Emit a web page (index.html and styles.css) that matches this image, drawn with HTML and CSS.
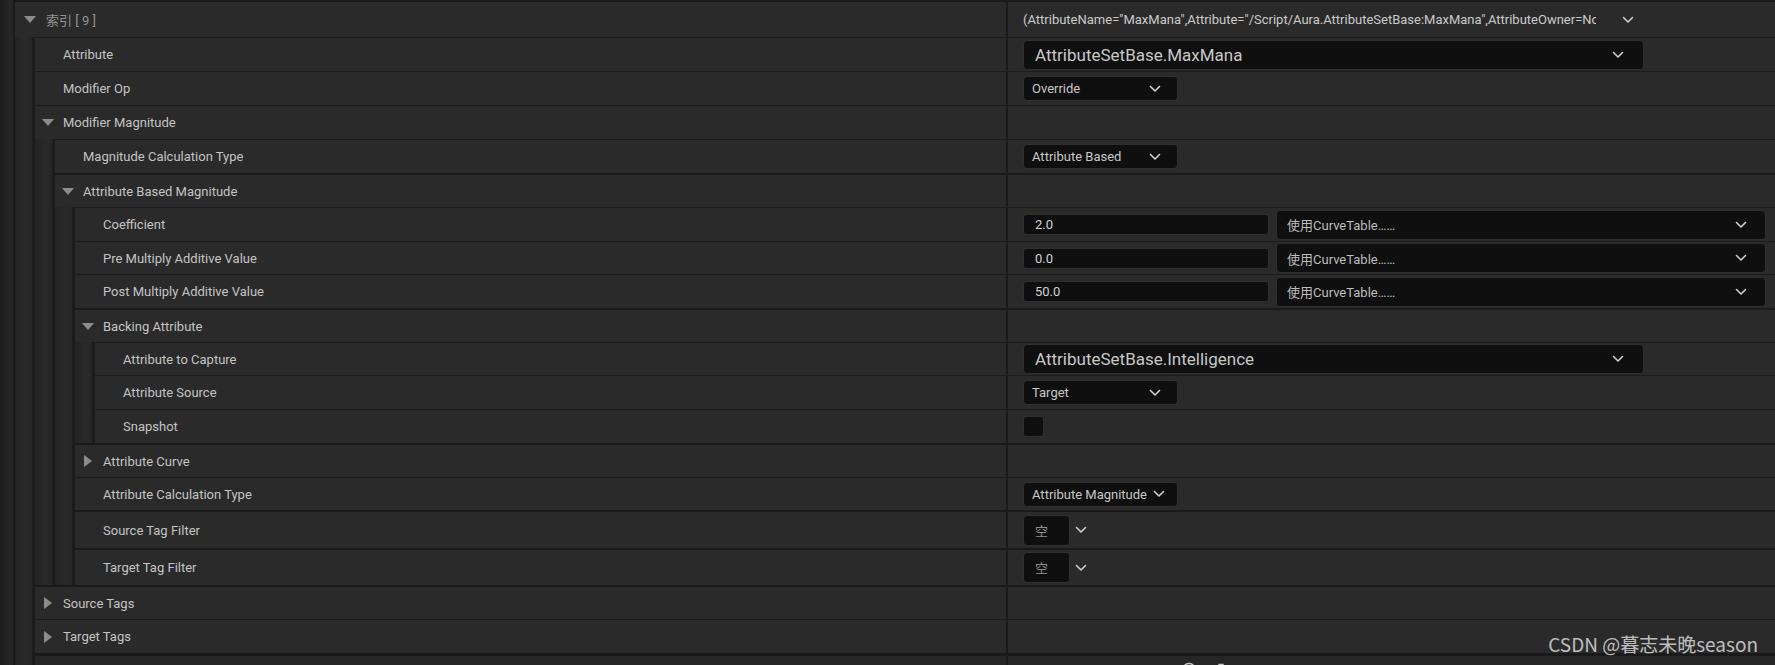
FILE: index.html
```html
<!DOCTYPE html>
<html>
<head>
<meta charset="utf-8">
<title>Details</title>
<link rel="stylesheet" href="styles.css">
</head>
<body>
<div class="panel">

  <div class="row h37 first">
    <div class="name"><span class="ind first"></span>
      <div class="cell top"><span class="twist down"></span><span class="label dim">索引 [ 9 ]</span></div>
    </div>
    <div class="value">
      <span class="summary">(AttributeName="MaxMana",Attribute="/Script/Aura.AttributeSetBase:MaxMana",AttributeOwner=None)</span>
      <svg class="chev sum-chev" viewBox="0 0 12 8"><path d="M1.5 1.5 6 6 10.5 1.5"/></svg>
    </div>
  </div>

  <div class="row">
    <div class="name"><span class="ind first"></span><span class="ind"></span>
      <div class="cell"><span class="twist"></span><span class="label">Attribute</span></div>
    </div>
    <div class="value">
      <div class="combo lg"><span>AttributeSetBase.MaxMana</span><svg class="chev" viewBox="0 0 12 8"><path d="M1.5 1.5 6 6 10.5 1.5"/></svg></div>
    </div>
  </div>

  <div class="row">
    <div class="name"><span class="ind first"></span><span class="ind"></span>
      <div class="cell"><span class="twist"></span><span class="label">Modifier Op</span></div>
    </div>
    <div class="value">
      <div class="combo sm"><span>Override</span><svg class="chev" viewBox="0 0 12 8"><path d="M1.5 1.5 6 6 10.5 1.5"/></svg></div>
    </div>
  </div>

  <div class="row">
    <div class="name"><span class="ind first"></span><span class="ind"></span>
      <div class="cell"><span class="twist down"></span><span class="label">Modifier Magnitude</span></div>
    </div>
    <div class="value"></div>
  </div>

  <div class="row">
    <div class="name"><span class="ind first"></span><span class="ind"></span><span class="ind"></span>
      <div class="cell"><span class="twist"></span><span class="label">Magnitude Calculation Type</span></div>
    </div>
    <div class="value">
      <div class="combo sm"><span>Attribute Based</span><svg class="chev" viewBox="0 0 12 8"><path d="M1.5 1.5 6 6 10.5 1.5"/></svg></div>
    </div>
  </div>

  <div class="row">
    <div class="name"><span class="ind first"></span><span class="ind"></span><span class="ind"></span>
      <div class="cell thick"><span class="twist down"></span><span class="label">Attribute Based Magnitude</span></div>
    </div>
    <div class="value thick"></div>
  </div>

  <div class="row">
    <div class="name"><span class="ind first"></span><span class="ind"></span><span class="ind"></span><span class="ind"></span>
      <div class="cell"><span class="twist"></span><span class="label">Coefficient</span></div>
    </div>
    <div class="value">
      <div class="num">2.0</div>
      <div class="combo curve"><span>使用CurveTable……</span><svg class="chev" viewBox="0 0 12 8"><path d="M1.5 1.5 6 6 10.5 1.5"/></svg></div>
    </div>
  </div>

  <div class="row h33">
    <div class="name"><span class="ind first"></span><span class="ind"></span><span class="ind"></span><span class="ind"></span>
      <div class="cell"><span class="twist"></span><span class="label">Pre Multiply Additive Value</span></div>
    </div>
    <div class="value">
      <div class="num">0.0</div>
      <div class="combo curve"><span>使用CurveTable……</span><svg class="chev" viewBox="0 0 12 8"><path d="M1.5 1.5 6 6 10.5 1.5"/></svg></div>
    </div>
  </div>

  <div class="row">
    <div class="name"><span class="ind first"></span><span class="ind"></span><span class="ind"></span><span class="ind"></span>
      <div class="cell"><span class="twist"></span><span class="label">Post Multiply Additive Value</span></div>
    </div>
    <div class="value">
      <div class="num">50.0</div>
      <div class="combo curve"><span>使用CurveTable……</span><svg class="chev" viewBox="0 0 12 8"><path d="M1.5 1.5 6 6 10.5 1.5"/></svg></div>
    </div>
  </div>

  <div class="row">
    <div class="name"><span class="ind first"></span><span class="ind"></span><span class="ind"></span><span class="ind"></span>
      <div class="cell thick"><span class="twist down"></span><span class="label">Backing Attribute</span></div>
    </div>
    <div class="value thick"></div>
  </div>

  <div class="row h33">
    <div class="name"><span class="ind first"></span><span class="ind"></span><span class="ind"></span><span class="ind"></span><span class="ind"></span>
      <div class="cell"><span class="twist"></span><span class="label">Attribute to Capture</span></div>
    </div>
    <div class="value">
      <div class="combo lg"><span>AttributeSetBase.Intelligence</span><svg class="chev" viewBox="0 0 12 8"><path d="M1.5 1.5 6 6 10.5 1.5"/></svg></div>
    </div>
  </div>

  <div class="row">
    <div class="name"><span class="ind first"></span><span class="ind"></span><span class="ind"></span><span class="ind"></span><span class="ind"></span>
      <div class="cell"><span class="twist"></span><span class="label">Attribute Source</span></div>
    </div>
    <div class="value">
      <div class="combo sm"><span>Target</span><svg class="chev" viewBox="0 0 12 8"><path d="M1.5 1.5 6 6 10.5 1.5"/></svg></div>
    </div>
  </div>

  <div class="row">
    <div class="name"><span class="ind first"></span><span class="ind"></span><span class="ind"></span><span class="ind"></span><span class="ind"></span>
      <div class="cell"><span class="twist"></span><span class="label">Snapshot</span></div>
    </div>
    <div class="value">
      <span class="check"></span>
    </div>
  </div>

  <div class="row">
    <div class="name"><span class="ind first"></span><span class="ind"></span><span class="ind"></span><span class="ind"></span>
      <div class="cell thick"><span class="twist right"></span><span class="label">Attribute Curve</span></div>
    </div>
    <div class="value thick"></div>
  </div>

  <div class="row h33">
    <div class="name"><span class="ind first"></span><span class="ind"></span><span class="ind"></span><span class="ind"></span>
      <div class="cell"><span class="twist"></span><span class="label">Attribute Calculation Type</span></div>
    </div>
    <div class="value">
      <div class="combo sm"><span>Attribute Magnitude</span><svg class="chev" viewBox="0 0 12 8"><path d="M1.5 1.5 6 6 10.5 1.5"/></svg></div>
    </div>
  </div>

  <div class="row h38">
    <div class="name"><span class="ind first"></span><span class="ind"></span><span class="ind"></span><span class="ind"></span>
      <div class="cell thick"><span class="twist"></span><span class="label">Source Tag Filter</span></div>
    </div>
    <div class="value thick">
      <span class="tagbox">空</span>
      <svg class="chev tag-chev" viewBox="0 0 12 8"><path d="M1.5 1.5 6 6 10.5 1.5"/></svg>
    </div>
  </div>

  <div class="row h37">
    <div class="name"><span class="ind first"></span><span class="ind"></span><span class="ind"></span><span class="ind"></span>
      <div class="cell thick"><span class="twist"></span><span class="label">Target Tag Filter</span></div>
    </div>
    <div class="value thick">
      <span class="tagbox">空</span>
      <svg class="chev tag-chev" viewBox="0 0 12 8"><path d="M1.5 1.5 6 6 10.5 1.5"/></svg>
    </div>
  </div>

  <div class="row">
    <div class="name"><span class="ind first"></span><span class="ind"></span>
      <div class="cell thick"><span class="twist right"></span><span class="label">Source Tags</span></div>
    </div>
    <div class="value thick"></div>
  </div>

  <div class="row">
    <div class="name"><span class="ind first"></span><span class="ind"></span>
      <div class="cell"><span class="twist right"></span><span class="label">Target Tags</span></div>
    </div>
    <div class="value"></div>
  </div>

  <div class="row partial">
    <div class="name"><span class="ind first"></span><span class="ind"></span>
      <div class="cell"><span class="twist"></span><span class="label">l</span></div>
    </div>
    <div class="value">
      <span class="array-label">数组元素</span>
      <svg class="icon add-icon" viewBox="0 0 16 16"><circle cx="8" cy="8" r="6.5"/><path d="M8 4.5v7M4.5 8h7"/></svg>
      <svg class="icon trash-icon" viewBox="0 0 16 16"><path d="M2.5 4h11M6 4V2.5h4V4M4 4l1 10h6l1-10"/></svg>
    </div>
  </div>

</div>
<div class="watermark">CSDN @暮志未晚season</div>
</body>
</html>
```

FILE: styles.css
```css
* { box-sizing: border-box; }

html, body {
  margin: 0;
  padding: 0;
  height: 665px;
  overflow: hidden;
  background: #1e1e1e;
}

body {
  position: relative;
  font-family: Roboto, "Noto Sans CJK SC", sans-serif;
  font-size: 13px;
  color: #c4c4c4;
}

.panel {
  display: flex;
  flex-direction: column;
  width: 1775px;
}

.row {
  display: flex;
  flex: none;
  height: 34px;
}
.row.h33 { height: 33px; }
.row.h37 { height: 37px; }
.row.h38 { height: 38px; }
.row.partial { height: 31px; }

.name {
  width: 1008px;
  flex: none;
  display: flex;
  border-right: 2px solid #1a1a1a;
}

.ind {
  width: 20px;
  flex: none;
  background: linear-gradient(to right, #232323, #292929 60%, #262626);
  border-right: 3px solid #1c1c1c;
}
.ind.first {
  width: 15px;
  background: linear-gradient(to right, #1c1c1c, #262626 70%);
  border-right: 2px solid #191919;
}

.cell {
  flex: 1;
  min-width: 0;
  display: flex;
  align-items: center;
  padding-left: 7px;
  background: #2a2a2a;
  border-top: 1px solid #1c1c1c;
}
.cell.top { padding-left: 9px; }

.value {
  flex: 1;
  min-width: 0;
  display: flex;
  align-items: center;
  padding-left: 15px;
  background: #2a2a2a;
  border-top: 1px solid #1c1c1c;
}

.row.first .cell,
.row.first .value { border-top: 2px solid #1a1a1a; }

.cell.thick,
.value.thick { border-top: 2px solid #1a1a1a; }

.row.partial .cell,
.row.partial .value {
  border-top: 3px solid #1a1a1a;
  background: #262626;
}

.twist {
  width: 12px;
  height: 12px;
  flex: none;
  margin-right: 9px;
  display: flex;
  align-items: center;
  justify-content: center;
}
.cell.top .twist { margin-right: 10px; }
.twist.down::before {
  content: "";
  border-left: 6px solid transparent;
  border-right: 6px solid transparent;
  border-top: 7px solid #8c8c8c;
}
.twist.right::before {
  content: "";
  border-top: 6px solid transparent;
  border-bottom: 6px solid transparent;
  border-left: 8px solid #8c8c8c;
}

.label { white-space: nowrap; }
.label.dim { color: #939393; }

.summary {
  width: 573px;
  overflow: hidden;
  white-space: nowrap;
  color: #cbcbcb;
}

.chev {
  width: 12px;
  height: 8px;
  flex: none;
  fill: none;
  stroke: #cfcfcf;
  stroke-width: 1.6;
  stroke-linecap: round;
  stroke-linejoin: round;
}
.sum-chev { margin-left: 26px; }
.tag-chev { margin-left: 5px; }

.combo {
  display: flex;
  align-items: center;
  justify-content: space-between;
  gap: 6px;
  background: #0f0f0f;
  border: 1px solid #2f2f2f;
  border-radius: 4px;
  color: #c8c8c8;
  white-space: nowrap;
}
.combo.lg {
  width: 621px;
  height: 30px;
  padding: 0 19px 0 11px;
  font-size: 17px;
}
.combo.sm {
  width: 155px;
  height: 25px;
  padding: 0 16px 0 8px;
}
.combo.curve {
  flex: 1;
  height: 30px;
  margin: 0 9px 0 7px;
  padding: 0 18px 0 10px;
  color: #bdbdbd;
}

.num {
  width: 246px;
  height: 21px;
  display: flex;
  align-items: center;
  padding-left: 11px;
  background: #0f0f0f;
  border: 1px solid #2f2f2f;
  border-radius: 3px;
  color: #d2d2d2;
}

.check {
  width: 21px;
  height: 21px;
  background: #0f0f0f;
  border: 1px solid #2f2f2f;
  border-radius: 3px;
}

.tagbox {
  width: 47px;
  height: 31px;
  display: flex;
  align-items: center;
  padding-left: 11px;
  background: #0f0f0f;
  border: 1px solid #2f2f2f;
  border-radius: 4px;
  color: #8e8e8e;
}

.array-label {
  margin-left: 7px;
  color: #c0c0c0;
}
.icon {
  width: 16px;
  height: 16px;
  flex: none;
  fill: none;
  stroke: #c8c8c8;
  stroke-width: 1.4;
}
.add-icon { margin-left: 99px; }
.trash-icon { margin-left: 16px; }

.watermark {
  position: absolute;
  right: 17px;
  top: 633px;
  font-family: "Noto Sans CJK SC", sans-serif;
  font-size: 19px;
  line-height: 22px;
  color: rgba(225, 225, 225, 0.82);
  white-space: nowrap;
}
```
